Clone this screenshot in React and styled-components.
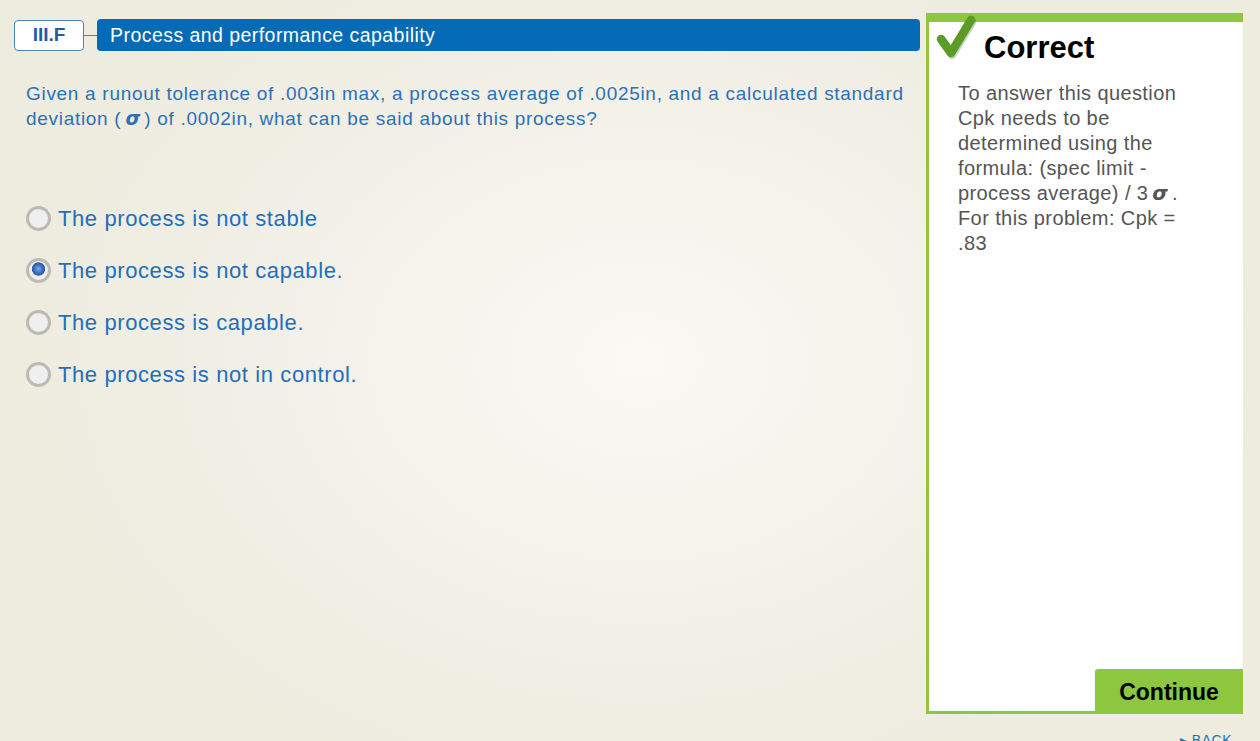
import styled, { createGlobalStyle } from "styled-components";

const GlobalStyle = createGlobalStyle`
  html, body {
    margin: 0;
    padding: 0;
    overflow: hidden;
  }
  body {
    font-family: "Liberation Sans", Arial, sans-serif;
    background: #eeebdf;
  }
`

const options = [
  "The process is not stable",
  "The process is not capable.",
  "The process is capable.",
  "The process is not in control.",
]

const Sigma = () => <SigmaGlyph>σ</SigmaGlyph>

export default function App() {
  return (
    <>
      <GlobalStyle />
      <Page>
        <Main>
          <QuestionColumn>
            <HeaderRow>
              <Badge>III.F</Badge>
              <Connector />
              <TitleBar>Process and performance capability</TitleBar>
            </HeaderRow>
            <Question>
              Given a runout tolerance of .003in max, a process average of .0025in, and a calculated standard
              deviation (<Sigma />) of .0002in, what can be said about this process?
            </Question>
            <OptionList>
              {options.map((text, i) => (
                <Option key={text}>
                  <Radio $checked={i === 1} />
                  {text}
                </Option>
              ))}
            </OptionList>
          </QuestionColumn>

          <FeedbackPanel>
            <Check viewBox="0 0 40 44">
              <path d="M5 24 L15 38 L35 5" fill="none" stroke="#3f7418" strokeWidth="9"
                strokeLinecap="round" strokeLinejoin="round" opacity="0.3" transform="translate(1 1.5)" />
              <path d="M5 24 L15 38 L35 5" fill="none" stroke="#5b9b26" strokeWidth="8.5"
                strokeLinecap="round" strokeLinejoin="round" />
            </Check>
            <FeedbackTitle>Correct</FeedbackTitle>
            <FeedbackText>
              To answer this question Cpk needs to be determined using the formula: (spec limit - process
              average) / 3<Sigma />. For this problem: Cpk = .83
            </FeedbackText>
            <ContinueRow>
              <ContinueButton type="button">Continue</ContinueButton>
            </ContinueRow>
          </FeedbackPanel>
        </Main>
        <Footer>
          <BackLink>▸ BACK</BackLink>
        </Footer>
      </Page>
    </>
  )
}

// Styled components

const Page = styled.div`
  height: 741px;
  display: flex;
  flex-direction: column;
  background: radial-gradient(ellipse 620px 460px at 640px 360px, #faf9f4 0%, #f4f2ea 45%, #eeebdf 100%);
`

const Main = styled.div`
  display: flex;
  padding: 13px 17px 0 14px;
  gap: 6px;
`

const QuestionColumn = styled.div`
  width: 906px;
  padding-top: 6px;
`

const HeaderRow = styled.div`
  display: flex;
  align-items: center;
  height: 32px;
`

const Badge = styled.div`
  box-sizing: border-box;
  width: 70px;
  height: 31px;
  border: 1px solid #4a84bd;
  border-radius: 4px;
  background: #fff;
  color: #1f5e9e;
  font-weight: 700;
  font-size: 19px;
  display: flex;
  align-items: center;
  justify-content: center;
`

const Connector = styled.div`
  width: 13px;
  height: 1px;
  background: #4a84bd;
`

const TitleBar = styled.div`
  flex: 1;
  height: 32px;
  border-radius: 4px;
  background: #056bb6;
  color: #fff;
  font-size: 19.5px;
  letter-spacing: 0.45px;
  display: flex;
  align-items: center;
  padding-left: 13px;
`

const Question = styled.p`
  margin: 30px 0 0 12px;
  width: 890px;
  color: #2b72b6;
  font-size: 19px;
  letter-spacing: 0.7px;
  line-height: 25px;
`

const SigmaGlyph = styled.span`
  font-family: "DejaVu Sans", sans-serif;
  font-weight: 700;
  font-style: italic;
  letter-spacing: 0;
  margin: 0 4px;
`

const OptionList = styled.div`
  margin: 74px 0 0 12px;
  display: flex;
  flex-direction: column;
  gap: 25px;
`

const Option = styled.label`
  display: flex;
  align-items: center;
  gap: 7px;
  height: 27px;
  color: #1e6fbd;
  font-size: 22px;
  letter-spacing: 0.6px;
`

const Radio = styled.span`
  box-sizing: border-box;
  width: 25px;
  height: 25px;
  border-radius: 50%;
  border: 3px solid #bcbab3;
  background: ${p => p.$checked
    ? "radial-gradient(circle at 50% 42%, #7aa7e6 0, #3466b5 5px, #2c5ea8 6.3px, #efefef 7px)"
    : "#efefef"};
  flex-shrink: 0;
`

const FeedbackPanel = styled.div`
  position: relative;
  box-sizing: border-box;
  width: 317px;
  height: 701px;
  background: #fff;
  border-top: 9px solid #8dc63f;
  border-left: 3px solid #8dc63f;
  border-bottom: 3px solid #8dc63f;
  display: flex;
  flex-direction: column;
`

const Check = styled.svg`
  position: absolute;
  left: 7px;
  top: -7px;
  width: 40px;
  height: 44px;
`

const FeedbackTitle = styled.h2`
  margin: 8px 0 0 55px;
  font-size: 31px;
  font-weight: 700;
  color: #000;
  line-height: 36px;
`

const FeedbackText = styled.p`
  margin: 15px 0 0 29px;
  width: 236px;
  color: #555;
  font-size: 20px;
  letter-spacing: 0.4px;
  line-height: 25px;
  flex: 1;
`

const ContinueRow = styled.div`
  display: flex;
  justify-content: flex-end;
`

const ContinueButton = styled.button`
  width: 148px;
  height: 42px;
  border: none;
  border-radius: 3px 0 0 0;
  background: #8dc63f;
  color: #000;
  font-family: "Liberation Sans", Arial, sans-serif;
  font-size: 23px;
  font-weight: 700;
  padding-top: 6px;
  cursor: pointer;
`

const Footer = styled.div`
  display: flex;
  justify-content: flex-end;
  padding: 18px 28px 0 0;
`

const BackLink = styled.a`
  color: #1e6fbd;
  font-size: 14px;
  letter-spacing: 0.5px;
`
